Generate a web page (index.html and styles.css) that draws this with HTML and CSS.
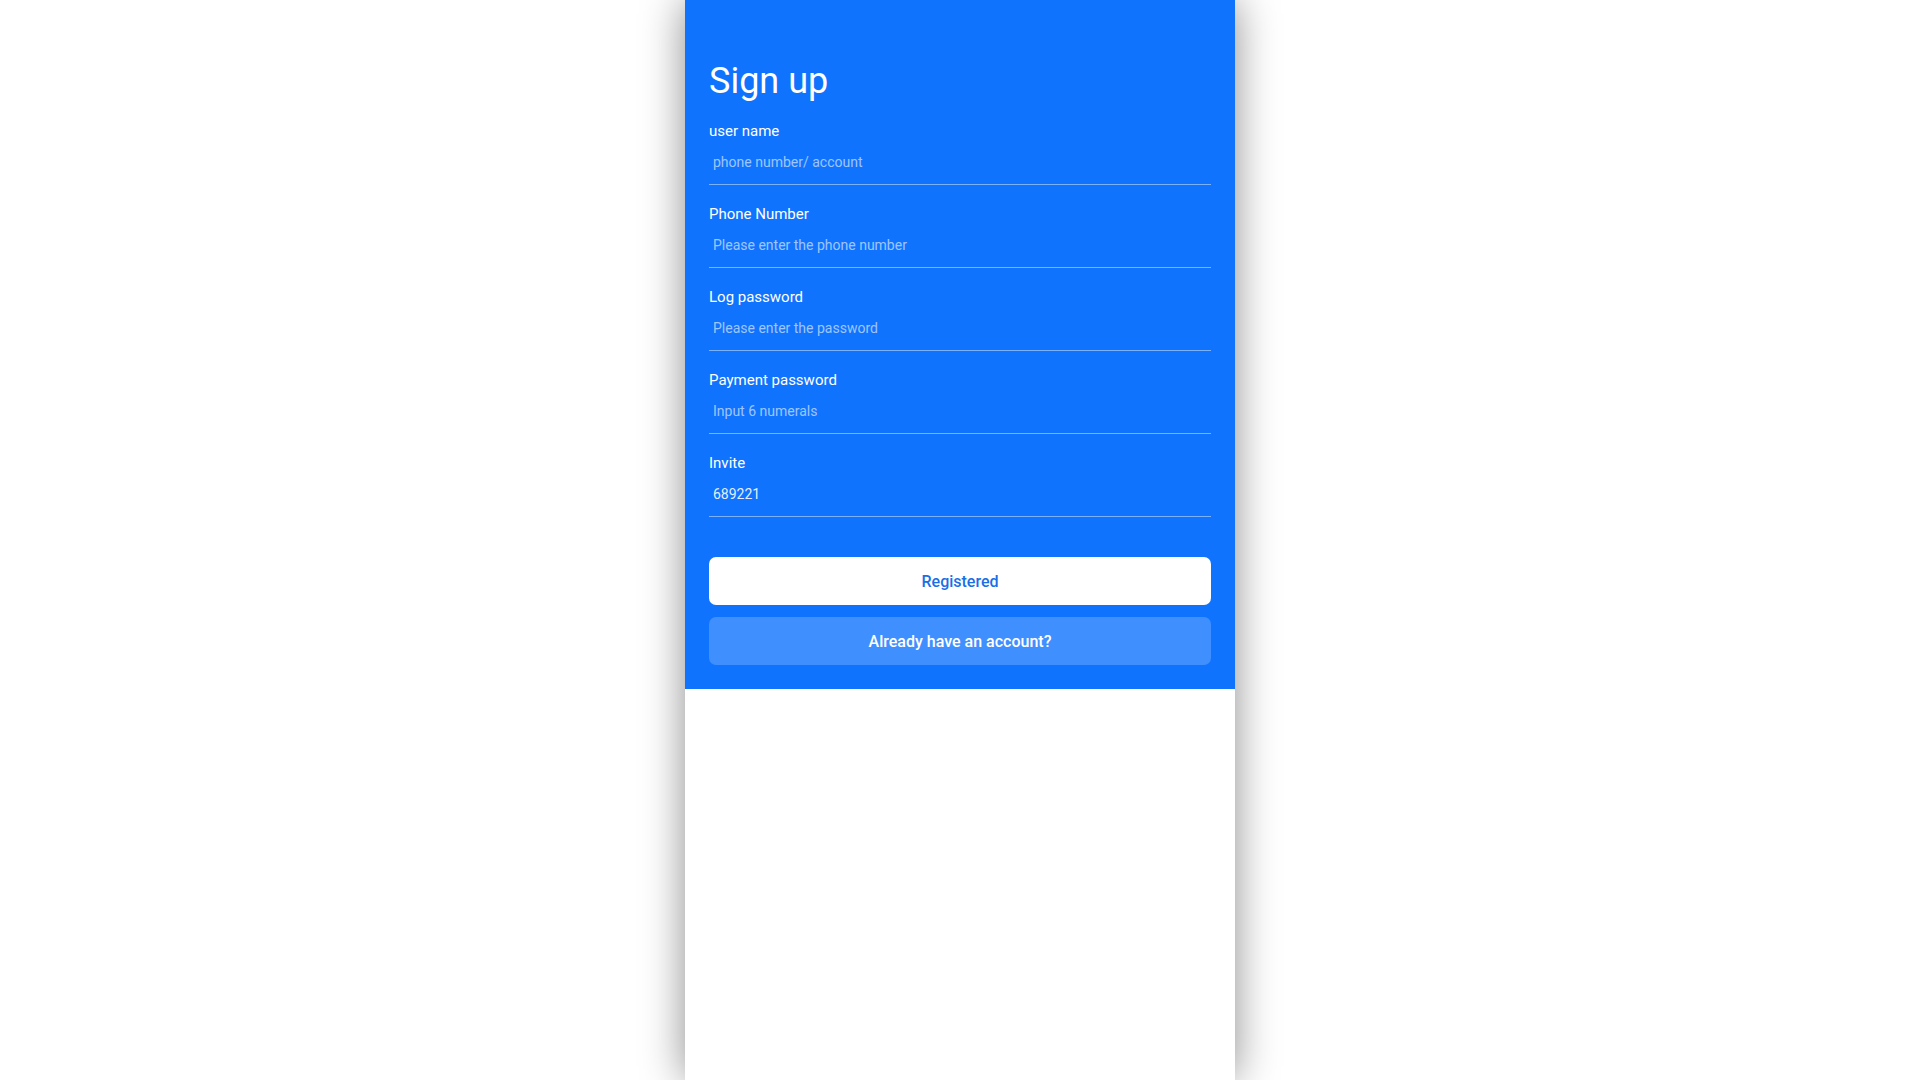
FILE: index.html
```html
<!DOCTYPE html>
<html lang="en">
<head>
<meta charset="utf-8">
<title>Sign up</title>
<link rel="stylesheet" href="styles.css">
</head>
<body>
<div class="app">
  <section class="signup">
    <h1 class="title">Sign up</h1>
    <form class="form">
      <div class="field">
        <label class="field-label">user name</label>
        <input class="field-input" type="text" placeholder="phone number/ account">
      </div>
      <div class="field">
        <label class="field-label">Phone Number</label>
        <input class="field-input" type="text" placeholder="Please enter the phone number">
      </div>
      <div class="field">
        <label class="field-label">Log password</label>
        <input class="field-input" type="password" placeholder="Please enter the password">
      </div>
      <div class="field">
        <label class="field-label">Payment password</label>
        <input class="field-input" type="password" placeholder="Input 6 numerals">
      </div>
      <div class="field">
        <label class="field-label">Invite</label>
        <input class="field-input" type="text" value="689221">
      </div>
      <div class="actions">
        <button type="button" class="btn btn-primary">Registered</button>
        <button type="button" class="btn btn-secondary">Already have an account?</button>
      </div>
    </form>
  </section>
</div>
</body>
</html>
```

FILE: styles.css
```css
* { box-sizing: border-box; }
html, body {
  margin: 0;
  padding: 0;
  height: 100%;
  background: #ffffff;
  font-family: Roboto, "Liberation Sans", Arial, sans-serif;
}
.app {
  width: 550px;
  min-height: 100%;
  margin: 0 auto;
  background: #ffffff;
  box-shadow: 0 0 40px rgba(0, 0, 0, 0.45);
}
.signup {
  background: #0f73fe;
  padding: 59px 24px 24px;
  color: #ffffff;
}
.title {
  margin: 0;
  font-size: 36px;
  line-height: 44px;
  font-weight: 400;
}
.form { display: flex; flex-direction: column; }
.field {
  display: flex;
  flex-direction: column;
  margin-top: 20px;
  border-bottom: 1px solid rgba(255, 255, 255, 0.45);
}
.field:first-child { margin-top: 19px; }
.field-label {
  font-size: 15px;
  line-height: 19px;
  font-weight: 400;
  color: #ffffff;
}
.field-input {
  height: 43px;
  border: 0;
  outline: none;
  background: transparent;
  padding: 0 4px 2px;
  font-family: inherit;
  font-size: 14px;
  color: rgba(255, 255, 255, 0.9);
}
.field-input::placeholder {
  color: rgba(255, 255, 255, 0.6);
}
.actions {
  display: flex;
  flex-direction: column;
  gap: 12px;
  margin-top: 40px;
}
.btn {
  height: 48px;
  border: 0;
  border-radius: 7px;
  font-family: inherit;
  font-size: 16px;
  font-weight: 500;
  cursor: pointer;
}
.btn-primary {
  background: #ffffff;
  color: #1a6fe6;
}
.btn-secondary {
  background: rgba(255, 255, 255, 0.2);
  color: #ffffff;
}
```
